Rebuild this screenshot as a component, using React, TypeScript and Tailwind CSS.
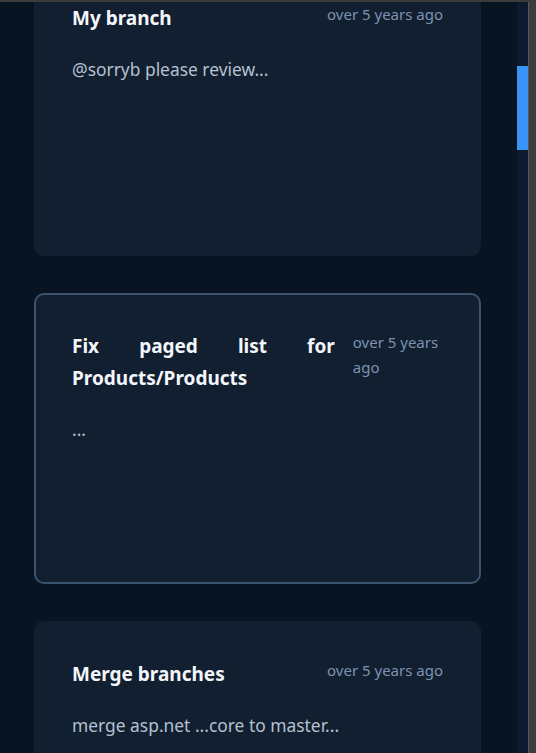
import React from "react";

type Commit = {
  title: string;
  time: string;
  message: string;
  active?: boolean;
};

const commits: Commit[] = [
  { title: "My branch", time: "over 5 years ago", message: "@sorryb please review..." },
  {
    title: "Fix paged list for Products/Products",
    time: "over 5 years ago",
    message: "...",
    active: true,
  },
  { title: "Merge branches", time: "over 5 years ago", message: "merge asp.net ...core to master..." },
];

const CommitCard: React.FC<{ commit: Commit }> = ({ commit }) => (
  <div
    className={`h-[291px] shrink-0 rounded-[10px] border-2 bg-[#121f30] px-[36px] pt-[35px] ${
      commit.active ? "border-[#3b536d]" : "border-transparent"
    }`}
  >
    <div className="flex items-start justify-between gap-[18px]">
      <h3 className="text-justify text-[19px] font-bold leading-[32px] text-[#f3f6fa]">
        {commit.title}
      </h3>
      <span className="text-[15px] leading-[25px] text-[#7b92b0]">{commit.time}</span>
    </div>
    <p className="mt-[22px] text-[17.4px] leading-[27px] text-[#b5c1d0]">{commit.message}</p>
  </div>
);

export default function App() {
  return (
    <div
      className="flex h-[753px] overflow-hidden bg-[#3c3c3c] pt-[2px]"
      style={{ fontFamily: "'Noto Sans', sans-serif" }}
    >
      <main className="flex-1 overflow-hidden bg-[#081421]">
        <div className="-mt-[37px] flex flex-col gap-[37px] pl-[34px] pr-[36px]">
          {commits.map((c) => (
            <CommitCard key={c.title} commit={c} />
          ))}
        </div>
      </main>
      <div className="w-[11px] bg-[#0b1b2d]">
        <div className="mt-[64px] h-[84px] bg-[#3a94f8]" />
      </div>
      <div className="w-px bg-[#5a5a5a]" />
      <div className="w-[7px]" />
    </div>
  );
}
